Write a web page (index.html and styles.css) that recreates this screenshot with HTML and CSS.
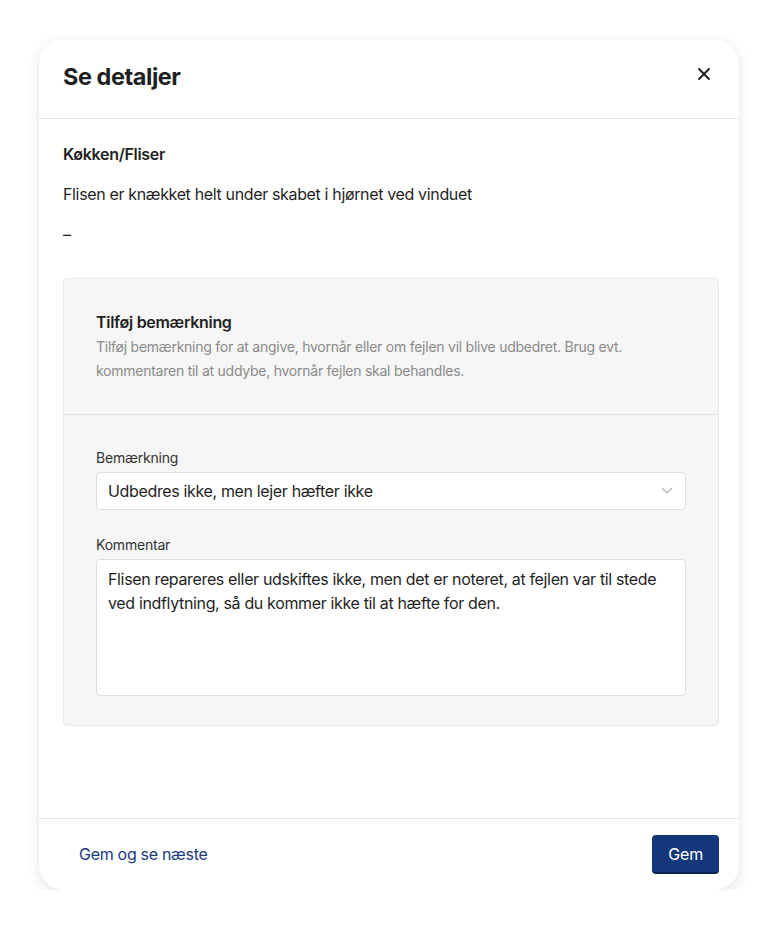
FILE: index.html
```html
<!DOCTYPE html>
<html lang="da">
<head>
<meta charset="utf-8">
<title>Se detaljer</title>
<link rel="stylesheet" href="styles.css">
</head>
<body>
<div class="modal">
  <header class="modal-header">
    <h1 class="modal-title">Se detaljer</h1>
    <button class="close" aria-label="Luk">
      <svg width="14" height="14" viewBox="0 0 14 14"><path d="M2 2L12 12M12 2L2 12" stroke="#1f1f1f" stroke-width="1.9" stroke-linecap="round"/></svg>
    </button>
  </header>
  <div class="modal-body">
    <h2 class="item-title">Køkken/Fliser</h2>
    <p class="item-text">Flisen er knækket helt under skabet i hjørnet ved vinduet</p>
    <p class="item-text">–</p>
    <section class="panel">
      <div class="panel-head">
        <h3 class="panel-title">Tilføj bemærkning</h3>
        <p class="panel-desc">Tilføj bemærkning for at angive, hvornår eller om fejlen vil blive udbedret. Brug evt. kommentaren til at uddybe, hvornår fejlen skal behandles.</p>
      </div>
      <div class="panel-body">
        <label class="field-label">Bemærkning</label>
        <div class="select">
          <span>Udbedres ikke, men lejer hæfter ikke</span>
          <svg width="12" height="8" viewBox="0 0 12 8"><path d="M1.5 1.5L6 6L10.5 1.5" fill="none" stroke="#b5b5b5" stroke-width="1.3" stroke-linecap="round" stroke-linejoin="round"/></svg>
        </div>
        <label class="field-label field-gap">Kommentar</label>
        <div class="textarea">Flisen repareres eller udskiftes ikke, men det er noteret, at fejlen var til stede ved indflytning, så du kommer ikke til at hæfte for den.</div>
      </div>
    </section>
  </div>
  <footer class="modal-footer">
    <button class="link-btn">Gem og se næste</button>
    <button class="primary-btn">Gem</button>
  </footer>
</div>
</body>
</html>
```

FILE: styles.css
```css
* { box-sizing: border-box; }
html, body { margin: 0; padding: 0; background: #ffffff; }
body {
  font-family: Inter, "Noto Sans", "Liberation Sans", sans-serif;
  color: #1f1f1f;
  padding: 39px 39px 0 39px;
}
.modal {
  width: 700px;
  background: #fff;
  border-radius: 24px;
  box-shadow: 0 4px 14px rgba(0,0,0,0.10), 0 0 2px rgba(0,0,0,0.06);
  overflow: hidden;
}
.modal-header {
  height: 80px;
  display: flex;
  align-items: center;
  justify-content: space-between;
  padding: 0 28px 0 24px;
  border-bottom: 1px solid #e6e6e6;
}
.modal-title {
  margin: 0;
  font-size: 23.5px;
  font-weight: 700;
  letter-spacing: -0.45px;
  padding-bottom: 4px;
}
.close {
  border: 0;
  background: none;
  padding: 0;
  width: 14px;
  height: 14px;
  display: flex;
  margin-bottom: 9px;
}
.modal-body {
  padding: 23px 20px 92px 24px;
}
.item-title {
  margin: 0;
  font-size: 16px;
  font-weight: 600;
  line-height: 24px;
  letter-spacing: -0.3px;
}
.item-text {
  margin: 16px 0 0;
  font-size: 16px;
  line-height: 24px;
  letter-spacing: -0.35px;
}
.panel {
  margin-top: 32px;
  background: #f6f6f6;
  border: 1px solid #e9e9e9;
  border-radius: 4px;
}
.panel-head {
  padding: 31px 32px 31px 32px;
  border-bottom: 1px solid #e3e3e3;
}
.panel-title {
  margin: 0;
  font-size: 16px;
  font-weight: 600;
  line-height: 24px;
  letter-spacing: -0.3px;
}
.panel-desc {
  margin: 1px 0 0;
  font-size: 14px;
  line-height: 24px;
  color: #8a8a8a;
  letter-spacing: -0.25px;
}
.panel-body {
  padding: 33px 32px 29px 32px;
}
.field-label {
  display: block;
  font-size: 14px;
  line-height: 20px;
  color: #333;
  margin-bottom: 4px;
  letter-spacing: -0.2px;
}
.field-gap { margin-top: 25px; }
.select {
  height: 38px;
  background: #fff;
  border: 1px solid #dedede;
  border-radius: 4px;
  display: flex;
  align-items: center;
  justify-content: space-between;
  padding: 0 12px 0 11px;
  font-size: 16px;
  letter-spacing: -0.35px;
}
.textarea {
  height: 137px;
  background: #fff;
  border: 1px solid #dedede;
  border-radius: 4px;
  padding: 7px 11px;
  font-size: 16px;
  line-height: 24px;
  letter-spacing: -0.35px;
}
.modal-footer {
  height: 72px;
  border-top: 1px solid #e6e6e6;
  display: flex;
  align-items: center;
  justify-content: space-between;
  padding: 0 20px 0 24px;
}
.link-btn {
  border: 0;
  background: none;
  font-family: inherit;
  font-size: 16px;
  color: #1a3a7c;
  padding: 0 16px 2px;
  letter-spacing: -0.3px;
}
.primary-btn {
  height: 39px;
  border: 0;
  border-bottom: 2px solid #0b2252;
  background: #13377a;
  color: #fff;
  font-family: inherit;
  font-size: 16px;
  border-radius: 4px;
  padding: 0 16px;
  letter-spacing: -0.2px;
}
```
